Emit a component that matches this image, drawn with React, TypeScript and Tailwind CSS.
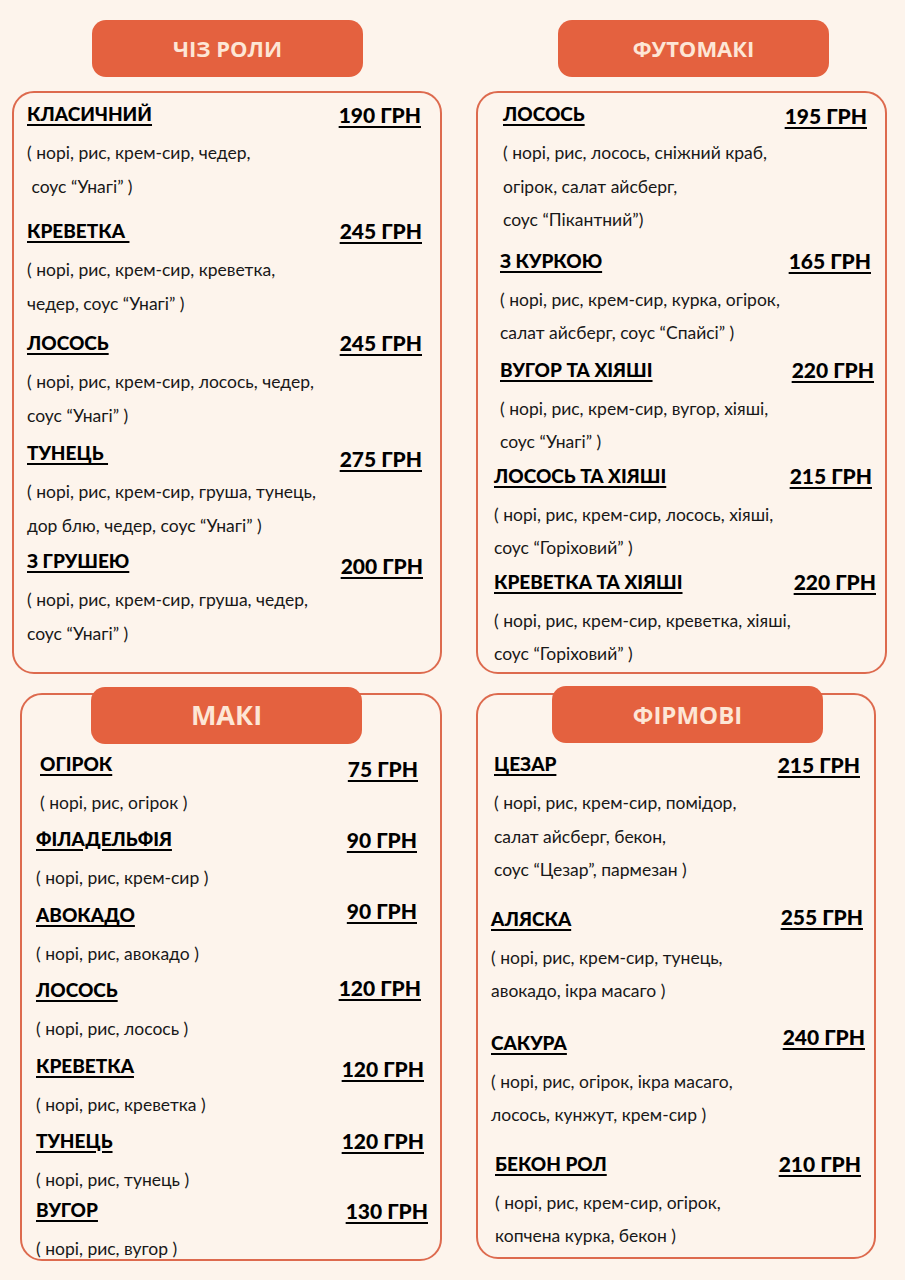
import React from "react";

interface Item {
  name: string;
  price: string;
  desc: string[];
  mt: string; // gap above the item
  ml: string; // extra left shift
  mr: string; // price right inset
  py: string; // price vertical nudge
}

const cheese: Item[] = [
  { name: "КЛАСИЧНИЙ", price: "190 ГРН", desc: ["( норі, рис, крем-сир, чедер,", " соус “Унагі” )"], mt: "mt-0", ml: "ml-0", mr: "mr-[19px]", py: "mt-[1px]" },
  { name: "КРЕВЕТКА ", price: "245 ГРН", desc: ["( норі, рис, крем-сир, креветка,", "чедер, соус “Унагі” )"], mt: "mt-[16px]", ml: "ml-0", mr: "mr-[18px]", py: "mt-0" },
  { name: "ЛОСОСЬ", price: "245 ГРН", desc: ["( норі, рис, крем-сир, лосось, чедер,", "соус “Унагі” )"], mt: "mt-[11px]", ml: "ml-0", mr: "mr-[18px]", py: "mt-0" },
  { name: "ТУНЕЦЬ ", price: "275 ГРН", desc: ["( норі, рис, крем-сир, груша, тунець,", "дор блю, чедер, соус “Унагі” )"], mt: "mt-[9px]", ml: "ml-0", mr: "mr-[18px]", py: "mt-[6px]" },
  { name: "З ГРУШЕЮ", price: "200 ГРН", desc: ["( норі, рис, крем-сир, груша, чедер,", "соус “Унагі” )"], mt: "mt-[7px]", ml: "ml-0", mr: "mr-[17px]", py: "mt-[5px]" },
];

const futo: Item[] = [
  { name: "ЛОСОСЬ", price: "195 ГРН", desc: ["( норі, рис, лосось, сніжний краб,", "огірок, салат айсберг,", "соус “Пікантний”)"], mt: "mt-0", ml: "ml-[9px]", mr: "mr-[18px]", py: "mt-[2px]" },
  { name: "З КУРКОЮ", price: "165 ГРН", desc: ["( норі, рис, крем-сир, курка, огірок,", "салат айсберг, соус “Спайсі” )"], mt: "mt-[12px]", ml: "ml-[6px]", mr: "mr-[14px]", py: "mt-0" },
  { name: "ВУГОР ТА ХІЯШІ", price: "220 ГРН", desc: ["( норі, рис, крем-сир, вугор, хіяші,", "соус “Унагі” )"], mt: "mt-[8px]", ml: "ml-[6px]", mr: "mr-[11px]", py: "mt-0" },
  { name: "ЛОСОСЬ ТА ХІЯШІ", price: "215 ГРН", desc: ["( норі, рис, крем-сир, лосось, хіяші,", "соус “Горіховий” )"], mt: "mt-[5px]", ml: "ml-0", mr: "mr-[13px]", py: "mt-0" },
  { name: "КРЕВЕТКА ТА ХІЯШІ", price: "220 ГРН", desc: ["( норі, рис, крем-сир, креветка, хіяші,", "соус “Горіховий” )"], mt: "mt-[5px]", ml: "ml-0", mr: "mr-[9px]", py: "mt-0" },
];

const maki: Item[] = [
  { name: "ОГІРОК", price: "75 ГРН", desc: ["( норі, рис, огірок )"], mt: "mt-0", ml: "ml-[4px]", mr: "mr-[22px]", py: "mt-[5px]" },
  { name: "ФІЛАДЕЛЬФІЯ", price: "90 ГРН", desc: ["( норі, рис, крем-сир )"], mt: "mt-[7px]", ml: "ml-0", mr: "mr-[23px]", py: "mt-[1px]" },
  { name: "АВОКАДО", price: "90 ГРН", desc: ["( норі, рис, авокадо )"], mt: "mt-[9px]", ml: "ml-0", mr: "mr-[23px]", py: "-mt-[4px]" },
  { name: "ЛОСОСЬ", price: "120 ГРН", desc: ["( норі, рис, лосось )"], mt: "mt-[7px]", ml: "ml-0", mr: "mr-[19px]", py: "-mt-[2px]" },
  { name: "КРЕВЕТКА", price: "120 ГРН", desc: ["( норі, рис, креветка )"], mt: "mt-[9px]", ml: "ml-0", mr: "mr-[16px]", py: "mt-[3px]" },
  { name: "ТУНЕЦЬ", price: "120 ГРН", desc: ["( норі, рис, тунець )"], mt: "mt-[7px]", ml: "ml-0", mr: "mr-[16px]", py: "mt-0" },
  { name: "ВУГОР", price: "130 ГРН", desc: ["( норі, рис, вугор )"], mt: "mt-[2px]", ml: "ml-0", mr: "mr-[12px]", py: "mt-[1px]" },
];

const signature: Item[] = [
  { name: "ЦЕЗАР", price: "215 ГРН", desc: ["( норі, рис, крем-сир, помідор,", "салат айсберг, бекон,", "соус “Цезар”, пармезан )"], mt: "mt-0", ml: "ml-[3px]", mr: "mr-[14px]", py: "mt-[1px]" },
  { name: "АЛЯСКА", price: "255 ГРН", desc: ["( норі, рис, крем-сир, тунець,", "авокадо, ікра масаго )"], mt: "mt-[20px]", ml: "ml-0", mr: "mr-[11px]", py: "-mt-[2px]" },
  { name: "САКУРА", price: "240 ГРН", desc: ["( норі, рис, огірок, ікра масаго,", "лосось, кунжут, крем-сир )"], mt: "mt-[23px]", ml: "ml-0", mr: "mr-[9px]", py: "-mt-[6px]" },
  { name: "БЕКОН РОЛ", price: "210 ГРН", desc: ["( норі, рис, крем-сир, огірок,", "копчена курка, бекон )"], mt: "mt-[20px]", ml: "ml-[4px]", mr: "mr-[13px]", py: "mt-0" },
];

const MenuRow: React.FC<{ item: Item }> = ({ item }) => (
  <div className={`${item.mt} ${item.ml}`}>
    <div className="flex items-start justify-between h-6">
      <span className="whitespace-pre font-['Lato',sans-serif] font-black text-[19px] leading-6 text-black underline decoration-2 underline-offset-[3px]">
        {item.name}
      </span>
      <span className={`${item.py} ${item.mr} font-['Lato',sans-serif] font-black text-[21px] leading-6 text-black underline decoration-2 underline-offset-[3px]`}>
        {item.price}
      </span>
    </div>
    <div className="mt-[10px]">
      {item.desc.map((line, i) => (
        <p key={i} className="whitespace-pre font-['Lato',sans-serif] text-[17.5px] leading-[33.5px] text-[#181818]">
          {line}
        </p>
      ))}
    </div>
  </div>
);

const Header: React.FC<{ title: string; cls: string; text: string }> = ({ title, cls, text }) => (
  <div className={`h-[57px] w-[271px] rounded-[14px] bg-[#e4613f] flex items-center justify-center ${cls}`}>
    <span className={`font-['Open_Sans',sans-serif] font-bold text-[#fde6d6] ${text}`}>{title}</span>
  </div>
);

export default function App() {
  return (
    <div className="w-[905px] min-h-[1280px] bg-[#fdf4ec] pt-[20px]">
      {/* top row */}
      <div className="flex">
        <div className="ml-[12px] w-[430px]">
          <Header title="ЧІЗ РОЛИ" cls="ml-[80px]" text="text-[22px]" />
          <div className="mt-[14px] h-[583px] rounded-[22px] border-2 border-[#dd6a4e] pt-[9px] pl-[13px]">
            {cheese.map((it) => (
              <MenuRow key={it.name} item={it} />
            ))}
          </div>
        </div>
        <div className="ml-[34px] w-[411px]">
          <Header title="ФУТОМАКІ" cls="ml-[82px]" text="text-[22px]" />
          <div className="mt-[14px] h-[583px] rounded-[22px] border-2 border-[#dd6a4e] pt-[9px] pl-[16px]">
            {futo.map((it) => (
              <MenuRow key={it.name} item={it} />
            ))}
          </div>
        </div>
      </div>

      {/* bottom row */}
      <div className="flex mt-[19px]">
        <div className="ml-[20px] w-[422px] h-[568px] rounded-[22px] border-2 border-[#dd6a4e] pl-[14px]">
          <Header title="МАКІ" cls="-mt-[8px] ml-[55px]" text="text-[27px]" />
          <div className="mt-[8px]">
            {maki.map((it) => (
              <MenuRow key={it.name} item={it} />
            ))}
          </div>
        </div>
        <div className="ml-[34px] w-[400px] h-[566px] rounded-[22px] border-2 border-[#dd6a4e] pl-[13px]">
          <Header title="ФІРМОВІ" cls="-mt-[9px] ml-[61px]" text="text-[24px]" />
          <div className="mt-[9px]">
            {signature.map((it) => (
              <MenuRow key={it.name} item={it} />
            ))}
          </div>
        </div>
      </div>
    </div>
  );
}
